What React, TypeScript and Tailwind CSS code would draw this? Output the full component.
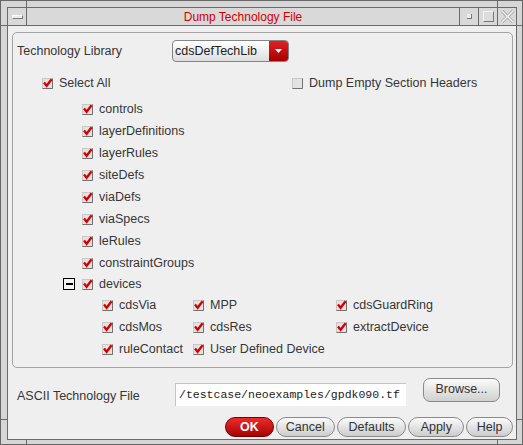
// App.tsx
import React from "react";

const CheckBox: React.FC<{ checked?: boolean }> = ({ checked = true }) => (
  <svg width="11" height="11" viewBox="0 0 11 11" className="shrink-0 overflow-visible">
    <rect x="0.5" y="0.5" width="10" height="10" fill="#e2e2e2" stroke="#c8c8c8" />
    <path d="M0.5 10.5 H10.5 V0.5" fill="none" stroke="#707070" />
    {checked && (
      <path d="M2 4.6 L4.6 7.8 L9.6 1.2" fill="none" stroke="#d40000" strokeWidth="2.3" />
    )}
  </svg>
);

const Check: React.FC<{ label: string; checked?: boolean }> = ({ label, checked = true }) => (
  <div className="flex items-center gap-[6px] whitespace-nowrap">
    <CheckBox checked={checked} />
    <span>{label}</span>
  </div>
);

const sections = [
  "controls",
  "layerDefinitions",
  "layerRules",
  "siteDefs",
  "viaDefs",
  "viaSpecs",
  "leRules",
  "constraintGroups",
];

const devices = [
  "cdsVia", "MPP", "cdsGuardRing",
  "cdsMos", "cdsRes", "extractDevice",
  "ruleContact", "User Defined Device", "",
];

const PillButton: React.FC<{ label: string; w: string; primary?: boolean }> = ({ label, w, primary }) => (
  <button
    className={
      primary
        ? `${w} h-[20px] rounded-full border border-[#6e0000] bg-gradient-to-b from-[#ee2a2a] to-[#a80000] text-white font-bold text-[12.5px]`
        : `${w} h-[20px] rounded-full border border-[#8a8a8a] bg-gradient-to-b from-[#fbfbfb] to-[#cdcdcd] text-[#333]`
    }
  >
    {label}
  </button>
);

const App: React.FC = () => {
  return (
    <div
      className="w-[523px] h-[445px] bg-[#d6d6d6] border border-[#666] flex flex-col text-[12.5px] text-[#363636]"
      style={{ fontFamily: '"Liberation Sans", Arial, sans-serif' }}
    >
      {/* top frame strip */}
      <div className="h-[6px] flex">
        <div className="w-[26px] border-r border-[#6a6a6a]" />
        <div className="flex-1" />
        <div className="w-[25px] border-l border-[#6a6a6a]" />
      </div>

      <div className="flex-1 flex min-h-0">
        {/* left frame */}
        <div className="w-[6px] flex flex-col">
          <div className="h-[19px] border-b border-[#6a6a6a]" />
          <div className="flex-1 border-b border-[#6a6a6a]" />
          <div className="h-[20px]" />
        </div>

        <div className="flex-1 flex flex-col border border-[#6a6a6a] min-w-0">
          {/* title bar */}
          <div className="h-[18px] flex border-b border-[#6a6a6a] bg-[#d9d9d9]">
            <div className="w-[19px] border-r border-[#6a6a6a] flex items-center justify-center">
              <div className="w-[11px] h-[4px] bg-[#ececec] border-r border-b border-[#777] border-t border-l border-t-white border-l-white" />
            </div>
            <div className="flex-1 flex items-center justify-center text-[12px] text-[#d00000]">
              Dump Technology File
            </div>
            <div className="w-[19px] border-l border-[#6a6a6a] flex items-center justify-center">
              <div className="w-[5px] h-[5px] bg-[#ececec] border-r border-b border-[#777]" />
            </div>
            <div className="w-[19px] border-l border-[#6a6a6a] flex items-center justify-center">
              <div className="w-[11px] h-[11px] border border-[#777] border-t-[#f4f4f4] border-l-[#f4f4f4] bg-[#dcdcdc]" />
            </div>
            <div className="w-[19px] border-l border-[#6a6a6a] flex items-center justify-center">
              <svg width="13" height="13" viewBox="0 0 13 13">
                <path d="M1 1 L12 12 M12 1 L1 12" stroke="#9a9a9a" strokeWidth="3" />
                <path d="M1 1 L12 12 M12 1 L1 12" stroke="#f6f6f6" strokeWidth="1.5" />
              </svg>
            </div>
          </div>

          {/* body */}
          <div className="flex-1 bg-[#efefef] pt-[6px] pl-[4px] pr-[3px] flex flex-col">
            <div className="border border-[#a4a4a4] rounded-[5px] pt-[7px] pb-[7px] flex flex-col">
              <div className="h-[22px] flex items-center pl-[4px]">
                <span className="w-[155px]">Technology Library</span>
                <div className="w-[117px] h-[22px] flex rounded-[4px] border border-[#858585] bg-gradient-to-b from-[#ffffff] to-[#dedede] overflow-hidden">
                  <span className="flex-1 pl-[2px] flex items-center text-[#222]">cdsDefTechLib</span>
                  <div className="w-[19px] bg-gradient-to-b from-[#e42020] to-[#a40000] flex items-center justify-center">
                    <svg width="7" height="4" viewBox="0 0 7 4">
                      <path d="M0 0 H7 L3.5 4 Z" fill="#fff" />
                    </svg>
                  </div>
                </div>
              </div>

              <div className="h-[22px] mt-[10px] flex items-center pl-[29px]">
                <div className="w-[250px]">
                  <Check label="Select All" />
                </div>
                <Check label="Dump Empty Section Headers" checked={false} />
              </div>

              <div className="mt-[4px] flex flex-col pl-[69px]">
                {sections.map((s) => (
                  <div key={s} className="h-[22px] flex items-center">
                    <Check label={s} />
                  </div>
                ))}
              </div>

              <div className="h-[20px] flex items-center pl-[50px] gap-[7px]">
                <div className="w-[12px] h-[12px] border-[1.5px] border-black bg-[#f4f4f4] flex items-center justify-center">
                  <div className="w-[7px] h-[2px] bg-black" />
                </div>
                <Check label="devices" />
              </div>

              <div className="grid grid-cols-[91px_143px_1fr] pl-[89px]">
                {devices.map((d, i) => (
                  <div key={i} className="h-[22px] flex items-center">
                    {d && <Check label={d} />}
                  </div>
                ))}
              </div>
            </div>

            <div className="mt-[10px] flex items-start pl-[5px]">
              <span className="w-[158px] mt-[9px]">ASCII Technology File</span>
              <div
                className="w-[231px] h-[23px] mt-[5px] bg-white border-t border-l border-[#c4c4c4] pl-[3px] flex items-center text-[11.5px] text-[#222]"
                style={{ fontFamily: '"Liberation Mono", "Courier New", monospace' }}
              >
                /testcase/neoexamples/gpdk090.tf
              </div>
              <button className="ml-[17px] w-[77px] h-[24px] rounded-[7px] border border-[#8a8a8a] bg-gradient-to-b from-[#fbfbfb] to-[#d0d0d0] text-[#333] pb-[2px]">
                Browse...
              </button>
            </div>

            <div className="mt-[11px] flex gap-[2px] pl-[213px]">
              <PillButton label="OK" w="w-[49px]" primary />
              <PillButton label="Cancel" w="w-[59px]" />
              <PillButton label="Defaults" w="w-[70px]" />
              <PillButton label="Apply" w="w-[56px]" />
              <PillButton label="Help" w="w-[47px]" />
            </div>
          </div>
        </div>

        {/* right frame */}
        <div className="w-[5px] flex flex-col">
          <div className="h-[19px] border-b border-[#6a6a6a]" />
          <div className="flex-1 border-b border-[#6a6a6a]" />
          <div className="h-[20px]" />
        </div>
      </div>

      {/* bottom frame strip */}
      <div className="h-[4px] flex">
        <div className="w-[26px] border-r border-[#6a6a6a]" />
        <div className="flex-1" />
        <div className="w-[25px] border-l border-[#6a6a6a]" />
      </div>
    </div>
  );
};

export default App;
